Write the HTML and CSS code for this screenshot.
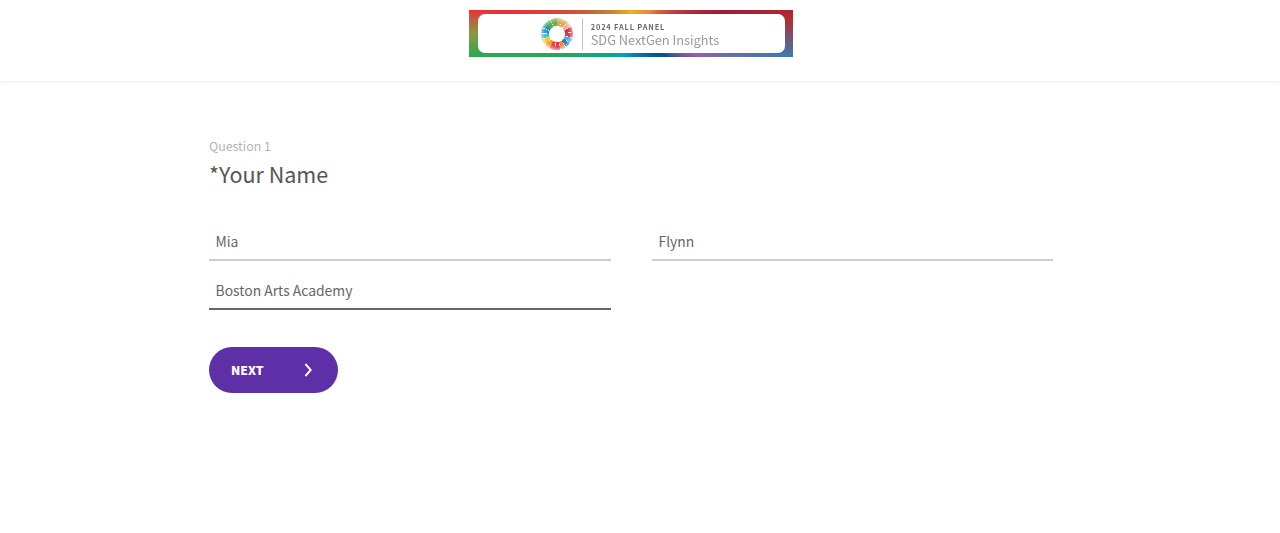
FILE: index.html

```html
<!DOCTYPE html>
<html lang="en">

<head>
    <meta charset="UTF-8">
    <meta name="viewport" content="width=device-width, initial-scale=1.0">
    <title>SDG NextGen Insights</title>
    <link rel="stylesheet" href="styles.css">
</head>

<body>
    <header class="top">
        <div class="banner">
            <div class="banner_in">
                <div class="ring"></div>
                <div class="banner_line"></div>
                <div class="banner_text">
                    <div class="banner_small">2024 FALL PANEL</div>
                    <div class="banner_big">SDG NextGen Insights</div>
                </div>
            </div>
        </div>
    </header>

    <div class="page">
        <div class="question">Question 1</div>
        <h1 class="title">*Your Name</h1>

        <div class="fields">
            <div class="field">Mia</div>
            <div class="field">Flynn</div>
            <div class="field active">Boston Arts Academy</div>
        </div>

        <button class="next" type="button">
            <span>NEXT</span>
            <svg class="arrow" width="8" height="14" viewBox="0 0 8 14">
                <path d="M1.4 1 L6.8 7 L1.4 13" fill="none" stroke="#fff" stroke-width="1.9" />
            </svg>
        </button>
    </div>
</body>

</html>
```

FILE: styles.css

```css
* {
    box-sizing: border-box;
}

body {
    margin: 0;
    height: 533px;
    overflow: hidden;
    background-color: #fff;
    color: #4a4a4a;
    font-family: "Noto Sans CJK SC", "Noto Sans", sans-serif;
}

.top {
    display: flex;
    justify-content: center;
    height: 81px;
    padding: 10px 18px 0 0;
    box-shadow: 0 1px 4px rgba(0, 0, 0, 0.09);
}

/* logo banner */
.banner {
    width: 324px;
    height: 47px;
    padding: 4px 8px 4px 9px;
    background: conic-gradient(#f0b41e 0deg, #e88a3c 40deg, #a0183c 77deg, #b52a2e 84deg, #3f78b0 98deg, #9a5cb0 108deg, #0a4f8c 123deg, #00a0c0 200deg, #10a878 238deg, #2fa650 262deg, #8a9a40 270deg, #e8303a 279deg, #b8703a 300deg, #f0b41e 360deg);
    filter: blur(0.4px);
}

.banner_in {
    display: flex;
    align-items: center;
    justify-content: center;
    height: 39px;
    padding-right: 3px;
    background-color: #fff;
    border-radius: 7px;
}

.ring {
    width: 32px;
    height: 32px;
    border-radius: 50%;
    filter: blur(0.5px);
    background: radial-gradient(circle, #fff 0 7.5px, rgba(255, 255, 255, 0) 8.5px 12px, rgba(255, 255, 255, 0.5) 16px),
        conic-gradient(#c9b25a 0 19deg, #fff 19deg 21deg, #e8a83c 21deg 40deg, #fff 40deg 42deg, #e8b0a0 42deg 61deg, #fff 61deg 63deg, #d8304a 63deg 82deg, #fff 82deg 84deg, #e8384a 84deg 103deg, #fff 103deg 105deg, #3ab8e0 105deg 124deg, #fff 124deg 126deg, #2a80c0 126deg 145deg, #fff 145deg 147deg, #f08a30 147deg 166deg, #fff 166deg 168deg, #e82a6a 168deg 187deg, #fff 187deg 189deg, #e84a3a 189deg 208deg, #fff 208deg 210deg, #f0a030 210deg 229deg, #fff 229deg 231deg, #f5c820 231deg 250deg, #fff 250deg 252deg, #40c0e0 252deg 271deg, #fff 271deg 273deg, #3a90c8 273deg 292deg, #fff 292deg 294deg, #20a0a0 294deg 313deg, #fff 313deg 315deg, #50b050 315deg 334deg, #fff 334deg 336deg, #70b040 336deg 360deg);
}

.banner_line {
    width: 1px;
    height: 32px;
    margin: 0 8px 0 9px;
    background-color: #c4c4c4;
}

.banner_text {
    margin-top: 3px;
}

.banner_small {
    font-size: 7.4px;
    line-height: 9px;
    font-weight: 700;
    letter-spacing: 0.85px;
    color: #666;
}

.banner_big {
    font-size: 12.8px;
    line-height: 18px;
    color: #999;
}

/* form */
.page {
    width: 844px;
    margin-left: 209px;
    padding-top: 55px;
}

.question {
    font-size: 12.4px;
    line-height: 20px;
    color: #b3b3b3;
}

.title {
    margin: 0;
    font-size: 21.5px;
    line-height: 36px;
    font-weight: 400;
    color: #555;
}

.fields {
    display: grid;
    grid-template-columns: 401.5px 401px;
    column-gap: 41.5px;
    row-gap: 13px;
    margin-top: 33px;
}

.field {
    height: 36px;
    padding: 0 6.5px;
    font-size: 13.9px;
    line-height: 33px;
    color: #666;
    border-bottom: 2px solid #ccc;
}

.active {
    border-bottom-color: #666;
}

.next {
    display: flex;
    align-items: center;
    justify-content: space-between;
    width: 129px;
    height: 46px;
    margin-top: 37px;
    padding: 0 26px 1px 22px;
    border: 0;
    border-radius: 23px;
    background-color: #5f2fa8;
    color: #fff;
    font-family: inherit;
    font-size: 12.2px;
    font-weight: 900;
}
```
